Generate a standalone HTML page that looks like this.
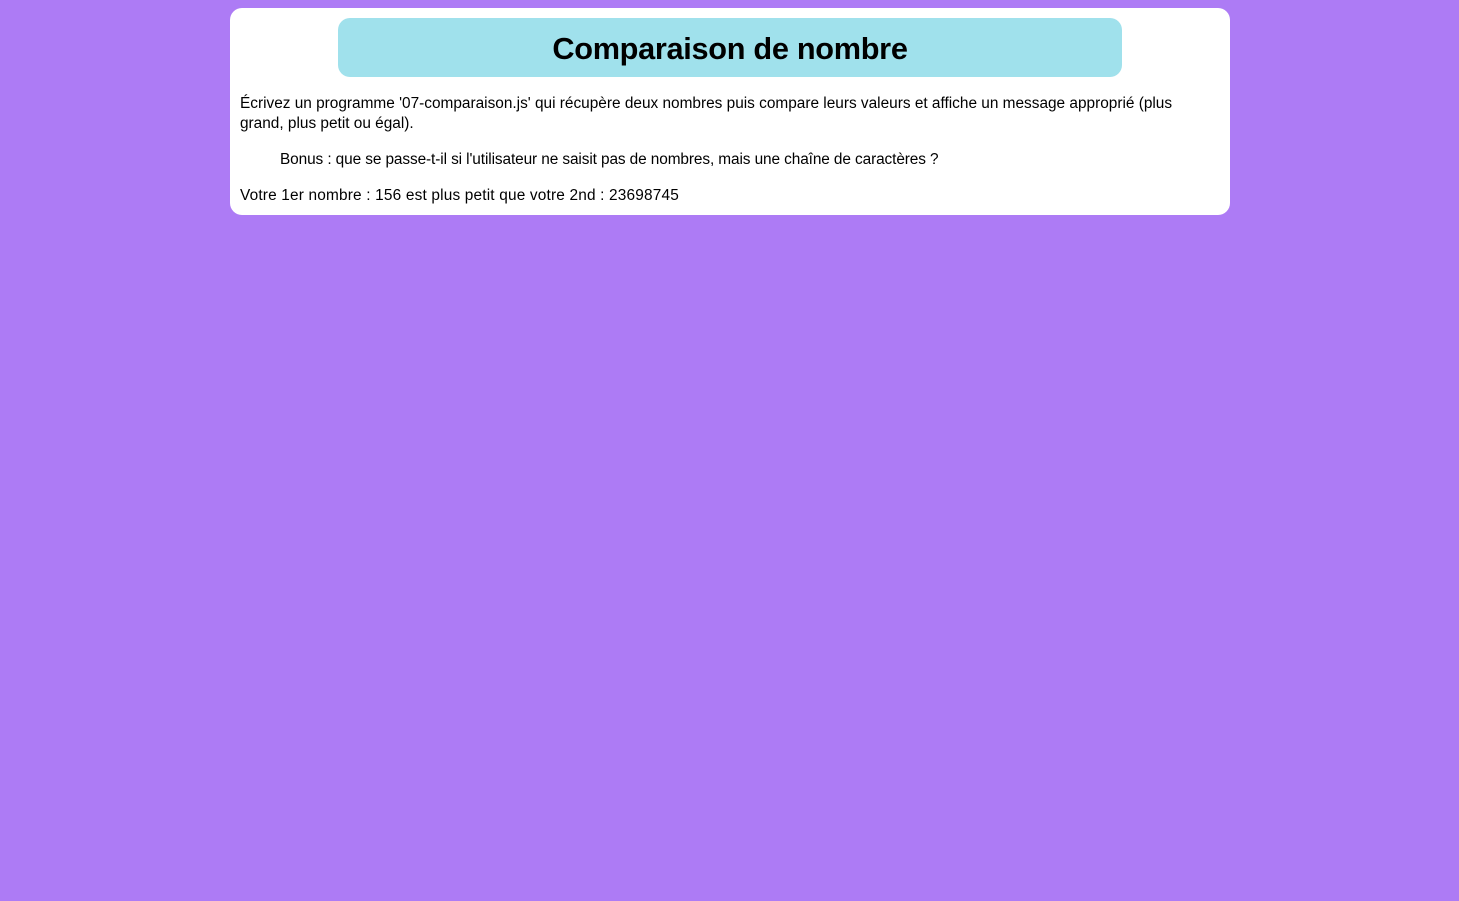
<!DOCTYPE html>
<html><head><meta charset="utf-8"><style>
html,body{margin:0;padding:0;background:#ad7bf5;width:1459px;height:901px;overflow:hidden;font-family:"Liberation Sans",sans-serif;color:#000}
.card{position:absolute;left:230px;top:8px;width:1000px;height:207px;background:#fff;border-radius:12px}
.title{position:absolute;left:108px;top:10px;width:784px;height:59px;background:#a0e1ec;border-radius:12px;text-align:center;font-weight:bold;font-size:30.7px;line-height:61px;letter-spacing:-0.3px}
.p{position:absolute;left:10px;font-size:15.4px;line-height:20px;width:950px;letter-spacing:0px;white-space:nowrap}
</style></head><body>
<div class="card">
<div class="title">Comparaison de nombre</div>
<div class="p" style="top:86px">Écrivez un programme '07-comparaison.js' qui récupère deux nombres puis compare leurs valeurs et affiche un message approprié (plus<br>grand, plus petit ou égal).</div>
<div class="p" style="top:142px;left:50px;letter-spacing:-0.1px">Bonus : que se passe-t-il si l'utilisateur ne saisit pas de nombres, mais une chaîne de caractères ?</div>
<div class="p" style="top:178px;letter-spacing:0.18px">Votre 1er nombre : 156 est plus petit que votre 2nd : 23698745</div>
</div>
</body></html>
